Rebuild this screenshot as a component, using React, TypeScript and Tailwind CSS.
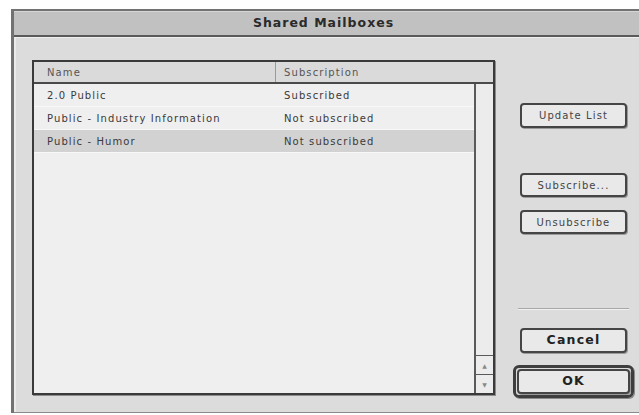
import React from "react";

const rows = [
  { name: "2.0 Public", sub: "Subscribed", selected: false },
  { name: "Public - Industry Information", sub: "Not subscribed", selected: false },
  { name: "Public - Humor", sub: "Not subscribed", selected: true },
];

const small = { fontFamily: '"DejaVu Sans", "Liberation Sans", sans-serif' };

function PushButton({ label, bold = false, className = "" }: { label: string; bold?: boolean; className?: string }) {
  return (
    <div
      className={`flex items-center justify-center rounded-[4px] border-2 border-[#454545] bg-[#e9e9e9] shadow-[1px_1px_0_#9a9a9a] ${
        bold ? "text-[12.5px] font-bold tracking-[1.2px] text-[#222]" : "text-[10px] tracking-[1.1px] text-[#444]"
      } ${className}`}
      style={small}
    >
      {label}
    </div>
  );
}

export default function App() {
  return (
    <div className="flex h-[415px] w-[639px] flex-col bg-white pl-[11px] pt-[9px]" style={small}>
      <div className="flex h-[404px] flex-col border-l-[3px] border-t-2 border-[#727272] bg-[#dcdcdc] shadow-[inset_2px_0_0_#eaeaea]">
        {/* title bar */}
        <div className="flex h-[26px] items-center justify-center border-b-2 border-t border-b-[#5a5a5a] border-t-[#d6d6d6] bg-[#c1c1c1] pr-[6px]">
          <span className="text-[12.5px] font-bold tracking-[1px] text-[#2a2a2a]">Shared Mailboxes</span>
        </div>

        {/* dialog body */}
        <div className="flex flex-1 border-b border-t border-b-[#8a8a8a] border-t-[#efefef] pl-[18px] pt-[22px]">
          {/* mailbox list */}
          <div className="flex h-[335px] w-[463px] flex-col border-2 border-[#3a3a3a] bg-[#efefef] shadow-[1px_1px_0_#8c8c8c]">
            <div className="flex h-[22px] shrink-0 items-center border-b-2 border-[#4a4a4a] bg-[#dadada] text-[10px] tracking-[1.1px] text-[#555]">
              <div className="w-[241px] pl-[13px]">Name</div>
              <div className="h-full border-l border-[#9a9a9a]" />
              <div className="pl-[8px]">Subscription</div>
            </div>
            <div className="flex flex-1">
              <div className="flex flex-1 flex-col">
                {rows.map((r) => (
                  <div
                    key={r.name}
                    className={`flex h-[23px] items-center border-b border-[#f8f8f8] text-[10px] tracking-[1.1px] text-[#3a3a3a] ${
                      r.selected ? "bg-[#d2d2d2]" : ""
                    }`}
                  >
                    <div className="w-[241px] whitespace-nowrap pl-[13px]">{r.name}</div>
                    <div className="whitespace-nowrap pl-[9px]">{r.sub}</div>
                  </div>
                ))}
              </div>
              {/* scroll bar */}
              <div className="flex w-[19px] flex-col justify-end border-l-2 border-[#5a5a5a] bg-[#ececec]">
                <div className="flex h-[19px] items-center justify-center border-t border-[#5a5a5a] text-[6px] text-[#8a8a8a]">▲</div>
                <div className="flex h-[19px] items-center justify-center border-t border-[#5a5a5a] text-[6px] text-[#8a8a8a]">▼</div>
              </div>
            </div>
          </div>

          {/* command buttons */}
          <div className="ml-[25px] flex w-[107px] flex-col">
            <PushButton label="Update List" className="mt-[43px] h-[25px]" />
            <PushButton label="Subscribe..." className="mt-[45px] h-[24px]" />
            <PushButton label="Unsubscribe" className="mt-[13px] h-[24px]" />
            <div className="mx-[-2px] mt-[74px] h-px bg-[#a8a8a8] shadow-[0_1px_0_#f0f0f0]" />
            <PushButton label="Cancel" bold className="mt-[19px] h-[25px]" />
            <div className="mx-[-7px] mt-[12px] flex h-[33px] rounded-[6px] border-[3px] border-[#3e3e3e] p-px shadow-[1px_1px_0_#8a8a8a]">
              <PushButton label="OK" bold className="flex-1" />
            </div>
          </div>
        </div>
      </div>
    </div>
  );
}
